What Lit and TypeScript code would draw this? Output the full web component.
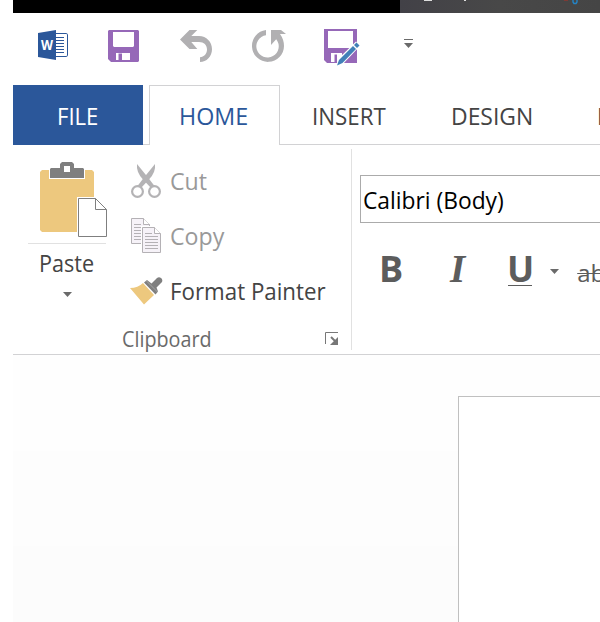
import { LitElement, html, css, svg } from "lit";
import { customElement } from "lit/decorators.js";

const wordIcon = html`<svg width="30" height="30" viewBox="0 0 30 30">
  <path d="M17 3.5H28.2Q29.5 3.5 29.5 4.8V25.2Q29.5 26.5 28.2 26.5H17" fill="#fff" stroke="#2b579a" />
  <path d="M18 7.5H26M18 10.5H26M18 13.5H26M18 16.5H26M18 19.5H26M18 22.5H26" stroke="#2b579a" />
  <path d="M0 3L18 0V30L0 27Z" fill="#2b579a" />
  <text x="3" y="20" font-family="Open Sans, sans-serif" font-weight="700" font-size="14" textLength="12" lengthAdjust="spacingAndGlyphs" fill="#fff">W</text>
</svg>`;

const saveIcon = html`<svg width="31" height="32" viewBox="0 0 31 32">
  <path d="M1 0H30L31 1V31L30 32H3L0 29V1Z" fill="#9668b8" />
  <path d="M5 2H26V16L25 17H6L5 16ZM8 23H22V30H14V23.5H10.5V30H8Z" fill="#fff" />
</svg>`;

const undoIcon = html`<svg width="32" height="32" viewBox="0 0 32 32">
  <path d="M9.5 0H17.3L11.3 6H19C26.5 6 32 12 32 19.2S26.5 32 20 32V27.2C24 27 27 24 27 19.5S24 12 19 12H11.3L17.3 19H9.5L0 9.5Z" fill="#b1b0b2" />
</svg>`;

const redoIcon = html`<svg width="34" height="32" viewBox="0 0 34 32">
  <path d="M14 0V5.2A11.2 11.2 0 1 0 24.2 9.2L19 15V0H29L34 4H28Q32 9.5 32 16A16 16 0 1 1 14 0Z" fill="#b1b0b2" />
</svg>`;

const saveAsIcon = html`<svg width="36" height="38" viewBox="0 0 36 38">
  <path d="M0 0H33V34H3L0 31Z" fill="#9668b8" />
  <path d="M4 2H29V19H4ZM7 24H18V33H13V25.5H10.5V33H7Z" fill="#fff" />
  <path d="M12 37.5L14 30L32 12.5L36.5 16.5L19 35Z" fill="#fff" />
  <path d="M13 36.5L15 31L29 17L32 20L18.5 34Z" fill="#4180b8" />
  <path d="M30 16L32.5 13.5L35.5 16.5L33 19Z" fill="#4180b8" />
</svg>`;

const pasteIcon = html`<svg width="68" height="76" viewBox="0 0 68 76">
  <path d="M2 8H52L54 10V70H2L0 68V10Z" fill="#edc87e" />
  <path d="M9 5H45V17H9Z" fill="#fff" />
  <path d="M10 7L11 6H20V2L22 0H32L34 2V6H43L44 7V16H10Z" fill="#7f7f7f" />
  <path d="M24 4H30V10H24Z" fill="#fff" />
  <path d="M37 35H57L68 46V76H37Z" fill="#fff" />
  <path d="M38.5 36.5H55.5L66.5 47.5V74.5H38.5ZM55.5 36.5V47.5H66.5" fill="#fff" stroke="#7f7f7f" />
</svg>`;

const cutIcon = html`<svg width="30" height="34" viewBox="0 0 30 34">
  <path d="M6 0L17 13.5L23.5 22L20 24L12 15.5Q5 8 6 0Z" fill="#b4b3b5" />
  <path d="M24 0L13 13.5L6.5 22L10 24L18 15.5Q25 8 24 0Z" fill="#b4b3b5" />
  <circle cx="6.5" cy="27.5" r="5.4" fill="#fff" stroke="#b4b3b5" stroke-width="2.2" />
  <circle cx="23.5" cy="27.5" r="5.4" fill="#fff" stroke="#b4b3b5" stroke-width="2.2" />
</svg>`;

const sheet = (x: number, y: number) => svg`<g transform="translate(${x} ${y})">
  <path d="M.5 .5H12.5L18.5 6.5V25.5H.5Z" fill="#f6f2f8" stroke="#b4b1b5" />
  <path d="M12.5 .5V6.5H18.5" fill="#fff" stroke="#b4b1b5" />
  <path d="M3 6.5H10M3 9.5H16M3 12.5H16M3 15.5H16M3 18.5H16M3 21.5H16" stroke="#b4b1b5" />
</g>`;

const copyIcon = html`<svg width="30" height="35" viewBox="0 0 30 35">
  ${sheet(0, 0)}<path d="M10 8H24L30 14V35H10Z" fill="#fff" />${sheet(11, 9)}
</svg>`;

const brushIcon = html`<svg width="34" height="28" viewBox="0 0 34 28">
  <path d="M0 11Q8 11 13 6L24 18L14 27.5Z" fill="#edc87e" />
  <path d="M14 5.5L17 3L21.5 6.5L27 1Q29 -.5 31 1T32 5L26.5 10.5L28 14.5L25.5 17.5Z" fill="#7f7f7f" />
  <path d="M16.5 4L27.5 15" stroke="#b5b5b5" stroke-width=".7" />
</svg>`;

const launcherIcon = html`<svg width="14" height="14" viewBox="0 0 14 14">
  <path d="M.5 12V.5H13" fill="none" stroke="#777" />
  <path d="M6 5L11 10" stroke="#777" stroke-width="2" />
  <path d="M13 5V13H5Z" fill="#777" />
</svg>`;

const arrow = html`<svg class="arrow" width="9" height="5" viewBox="0 0 9 5"><path d="M0 0H9L4.5 5Z" fill="#6a6a6a" /></svg>`;

@customElement("app-root")
export class AppRoot extends LitElement {
  static styles = css`
    :host {
      display: flex;
      flex-direction: column;
      box-sizing: border-box;
      width: 600px;
      height: 622px;
      padding-left: 13px;
      overflow: hidden;
      background: #fff;
      color: #444;
      font: 24px/32px "Open Sans", "Noto Sans", sans-serif;
      white-space: nowrap;
    }
    svg { display: block; flex: none; }
    span { display: inline-block; transform-origin: 0 50%; transform: scaleX(.93); }
    .titlebar { height: 13px; flex: none; display: flex; background: #000; }
    .wallpaper { margin-left: 387px; width: 200px; background: linear-gradient(90deg, #424147, #484848 50%, #454545); }
    .quick { height: 72px; flex: none; display: flex; align-items: flex-start; }
    .quick svg { margin-top: 17px; }
    .word { margin-left: 25px; }
    .save { margin-left: 40px; }
    .undo { margin-left: 41px; }
    .redo { margin-left: 40px; }
    .saveas { margin: -1px 0 0 38px; }
    .more { margin: 26px 0 0 44px; border-top: 1px solid #6a6a6a; padding-top: 3px; width: 9px; }
    .quick .more svg { margin: 0; }
    .tabs { height: 60px; flex: none; display: flex; box-sizing: border-box; }
    .tab, .gap { box-sizing: border-box; border-bottom: 1px solid #d2d2d4; flex: none; }
    .tab { padding-top: 15px; }
    .gap { width: 6px; }
    .file { width: 130px; padding-left: 44px; background: #2b579a; color: #fff; border: 0; }
    .file span { transform: scaleX(.92); }
    .home { width: 131px; padding: 14px 0 0 29px; border: 1px solid #d2d2d4; border-bottom: 0; color: #2b579a; }
    .home span { transform: scaleX(.97); }
    .insert { width: 168px; padding-left: 32px; }
    .design { width: 146px; padding-left: 3px; }
    .design span { transform: scaleX(.955); }
    .last { width: 60px; padding-left: 3px; }
    .ribbon { height: 209px; flex: none; display: flex; border-bottom: 1px solid #d2d2d4; }
    .clipboard { flex: none; width: 338px; height: 201px; margin-top: 4px; border-right: 1px solid #e1e1e1; display: grid; grid-template: 177px 24px / 116px 1fr; }
    .paste { display: flex; flex-direction: column; padding: 13px 0 0 15px; }
    .paste > svg { margin-left: 12px; }
    .rule { width: 78px; height: 1px; margin-top: 5px; background: #e1e1e1; }
    .label { margin: 2px 0 0 11px; line-height: 34px; }
    .label span { transform: scaleX(.9); }
    .paste .arrow { margin: 12px 0 0 35px; }
    .commands { padding: 4px 0 0 1px; }
    .command { display: flex; align-items: center; height: 55px; }
    .command svg { margin: 0 0 0 1px; }
    .command:last-child svg { margin-left: 0; }
    .slot { width: 40px; flex: none; }
    .command.off { color: #999; }
    .command.off span { transform: scaleX(.965); }
    .footer { grid-column: 1 / 3; display: flex; padding-left: 109px; color: #6a6a6a; font-size: 21px; line-height: 26px; }
    .footer span { transform: scaleX(.94); }
    .footer svg { margin: 6px 0 0 auto; padding-right: 12px; }
    .font { flex: none; margin-left: 8px; width: 260px; }
    .box { height: 46px; margin-top: 30px; border: 1px solid #ababab; padding-left: 2px; line-height: 48px; color: #000; }
    .box span { transform: scaleX(.95); }
    .formats { display: flex; height: 60px; margin-top: 16px; color: #5c5c5c; font-size: 36px; line-height: 60px; font-weight: 700; }
    .bold { width: 70px; padding-left: 19px; }
    .italic { width: 58px; padding-left: 1px; margin-right: -1px; font: italic 700 39px/60px "Liberation Serif", serif; }
    .underline { height: 46px; }
    .underline i { display: block; width: 24px; height: 1px; background: #5c5c5c; margin: -14px 0 0 1px; }
    .formats .arrow { margin: 30px 18px 0 16px; }
    .strike { font-weight: 400; font-size: 24px; line-height: 68px; text-decoration: line-through 1px; }
    .canvas { flex: 1; display: flex; padding: 41px 0 0 445px; background: linear-gradient(#fefefe 96px, #fdfdfd 96px 191px, #fcfcfc 191px); }
    .page { flex: 1; border: solid #c0c0c0; border-width: 1px 0 0 1px; background: #fff; }
  `;

  render() {
    return html`
      <div class="titlebar"><svg class="wallpaper" width="200" height="13" viewBox="0 0 200 13">
        <path d="M24 .5H32M64 .5H66" stroke="#ddd" />
        <path d="M164 .5H168" stroke="#7d3a35" />
        <path d="M173 0V2L174 3.5H176L177 2V0" fill="none" stroke="#2384c6" stroke-width="1.4" />
      </svg></div>
      <div class="quick">
        <div class="word">${wordIcon}</div>
        <div class="save">${saveIcon}</div>
        <div class="undo">${undoIcon}</div>
        <div class="redo">${redoIcon}</div>
        <div class="saveas">${saveAsIcon}</div>
        <div class="more">${arrow}</div>
      </div>
      <div class="tabs">
        <div class="tab file"><span>FILE</span></div><div class="gap"></div>
        <div class="tab home"><span>HOME</span></div>
        <div class="tab insert"><span>INSERT</span></div>
        <div class="tab design"><span>DESIGN</span></div>
        <div class="tab last"><span>L</span></div>
      </div>
      <div class="ribbon">
        <div class="clipboard">
          <div class="paste">
            ${pasteIcon}
            <div class="rule"></div>
            <div class="label"><span>Paste</span></div>
            ${arrow}
          </div>
          <div class="commands">
            <div class="command off"><div class="slot">${cutIcon}</div><span>Cut</span></div>
            <div class="command off"><div class="slot">${copyIcon}</div><span>Copy</span></div>
            <div class="command"><div class="slot">${brushIcon}</div><span>Format Painter</span></div>
          </div>
          <div class="footer"><span>Clipboard</span>${launcherIcon}</div>
        </div>
        <div class="font">
          <div class="box"><span>Calibri (Body)</span></div>
          <div class="formats">
            <div class="bold">B</div>
            <div class="italic">I</div>
            <div class="underline">U<i></i></div>
            ${arrow}
            <div class="strike">ab</div>
          </div>
        </div>
      </div>
      <div class="canvas"><div class="page"></div></div>
    `;
  }
}
